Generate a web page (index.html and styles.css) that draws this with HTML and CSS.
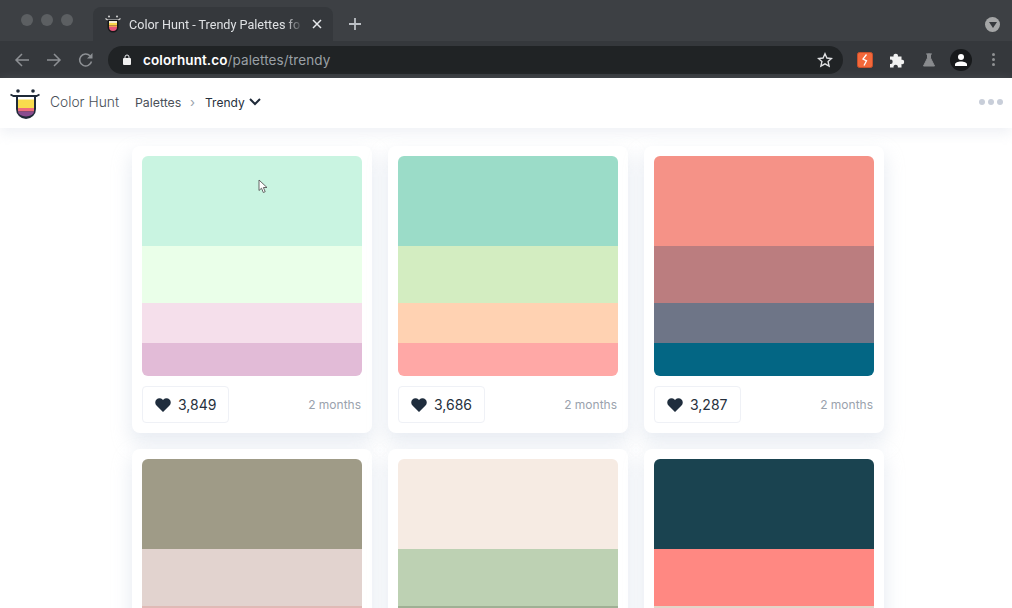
FILE: index.html
```html
<!DOCTYPE html>
<html lang="en">
<head>
<meta charset="utf-8">
<title>Color Hunt</title>
<link rel="stylesheet" href="styles.css">
</head>
<body>
<div class="browser">
  <div class="tabstrip">
    <div class="lights"><i></i><i></i><i></i></div>
    <div class="tab">
      <svg class="favicon" width="16" height="18" viewBox="0 0 16 18"><circle cx="4" cy="1.500" r="1" fill="#d8d8d8"/><circle cx="12" cy="1.500" r="1" fill="#d8d8d8"/><path d="M.5 3.500l2 1.500h11l2-1.500" fill="none" stroke="#d8d8d8" stroke-width="1.200"/><path d="M2.500 5h11v7a5.500 5.500 0 0 1-11 0z" fill="#17181a"/><path d="M4 6h8v2H4z" fill="#f4ead2"/><path d="M4 8h8v2.500H4z" fill="#f9d84a"/><path d="M4 10.500h8v1.500H4z" fill="#f29a55"/><path d="M4 12h8a4 4 0 0 1-8 0z" fill="#e8557a"/></svg>
      <span class="tab-title">Color Hunt - Trendy Palettes fo</span>
      <svg class="tab-close" width="10" height="10" viewBox="0 0 10 10"><path d="M1 1l8 8M9 1l-8 8" stroke="#e8eaed" stroke-width="1.500"/></svg>
    </div>
    <svg class="new-tab" width="14" height="14" viewBox="0 0 14 14"><path d="M7 1v12M1 7h12" stroke="#bdc1c6" stroke-width="1.800"/></svg>
    <div class="tab-search"><svg width="8" height="6" viewBox="0 0 8 6"><path d="M0 0h8L4 6z" fill="#35383c"/></svg></div>
  </div>
  <div class="toolbar">
    <svg class="nav" width="16" height="16" viewBox="0 0 16 16"><path d="M15 8H2M8 2L2 8l6 6" fill="none" stroke="#8d9094" stroke-width="1.500"/></svg>
    <svg class="nav" width="16" height="16" viewBox="0 0 16 16"><path d="M1 8h13M8 2l6 6-6 6" fill="none" stroke="#8d9094" stroke-width="1.500"/></svg>
    <svg class="nav" width="16" height="16" viewBox="0 0 16 16"><path d="M13.500 9.500A6 6 0 1 1 12 3.800" fill="none" stroke="#8d9094" stroke-width="1.500"/><path d="M14.500 1v5.500H9z" fill="#8d9094"/></svg>
    <div class="omnibox">
      <svg class="lock" width="10" height="12" viewBox="0 0 10 12"><path d="M3 4V3a2 2 0 0 1 4 0v1" fill="none" stroke="#e8eaed"/><rect x="1" y="4" width="8" height="7" rx="1" fill="#f1f1f1"/></svg>
      <span class="url"><b>colorhunt.co</b>/palettes/trendy</span>
      <svg class="star" width="16" height="16" viewBox="0 0 16 16"><path d="M8 1.800l1.900 4.200 4.600.5-3.400 3.100 1 4.500L8 11.800l-4.100 2.300 1-4.500L1.500 6.500l4.600-.5z" fill="none" stroke="#e0e1e3" stroke-width="1.400"/></svg>
    </div>
    <div class="ext-icons">
      <svg width="16" height="16" viewBox="0 0 16 16"><rect x=".5" y=".5" width="15" height="15" rx="2" fill="#f4683a" stroke="#c9502c"/><path d="M9.500 2.500L6 7l3.500 1.800L7 13.500" fill="none" stroke="#fff" stroke-width="1.300"/></svg>
      <svg width="16" height="16" viewBox="0 0 16 16"><path d="M1 4.500h3.600a2.200 2.200 0 1 1 4.300 0h3.600v3.300a2.200 2.200 0 1 1 0 4.300v3.400H8.800a2.200 2.200 0 1 0-4.200 0H1v-3.500a2.200 2.200 0 1 0 0-4.300z" fill="#f1f1f1"/></svg>
      <svg width="14" height="14" viewBox="0 0 14 14"><path d="M4 1h6M5.500 1v4L1.500 13h11L8.500 5V1z" fill="#898b8e" stroke="#898b8e"/></svg>
      <span class="avatar"><svg width="14" height="14" viewBox="0 0 14 14"><circle cx="7" cy="4" r="3" fill="#fff"/><path d="M1 13v-1.500c0-2 3-3 6-3s6 1 6 3V13z" fill="#fff"/></svg></span>
      <span class="kebab"><i></i><i></i><i></i></span>
    </div>
  </div>
</div>
<header class="site-header">
  <svg class="logo" width="30" height="30" viewBox="0 0 30 30"><circle cx="8" cy="2" r="1.800" fill="#1f2a38"/><circle cx="23" cy="2" r="1.800" fill="#1f2a38"/><path d="M.5 5.500l3 1.500h23l3-1.500" fill="none" stroke="#1f2a38" stroke-width="1.800"/><path d="M6 7h20v13a10 10 0 0 1-20 0z" fill="#1f2a38"/><path d="M8 8h16v3H8z" fill="#fff"/><path d="M8 10.500h16v8.500H8z" fill="#f9dc4e"/><path d="M8 19h16v3.500H8z" fill="#ee6c7c"/><path d="M8 22.500h16a8 5 0 0 1-16 0z" fill="#8a4c8f"/></svg>
  <span class="brand">Color Hunt</span>
  <span class="crumb">Palettes</span>
  <span class="sep">›</span>
  <span class="crumb-current">Trendy</span>
  <svg class="chevron" width="12" height="8" viewBox="0 0 12 8"><path d="M1 1l5 5 5-5" fill="none" stroke="#1f2a38" stroke-width="2"/></svg>
  <span class="more"><i></i><i></i><i></i></span>
</header>
<main class="grid">
  <article class="card">
    <div class="palette">
      <div class="c1" style="background:#c9f4e1"></div>
      <div class="c2" style="background:#eaffe9"></div>
      <div class="c3" style="background:#f5dfeb"></div>
      <div class="c4" style="background:#e2bbd7"></div>
    </div>
    <div class="meta"><button class="like"><svg width="16" height="14" viewBox="0 0 16 14"><path d="M8 14L1.500 7.500a4.200 4.200 0 0 1 0-6 4.200 4.200 0 0 1 6 0L8 2l.5-.5a4.200 4.200 0 0 1 6 0 4.200 4.200 0 0 1 0 6z" fill="#1f2d3d"/></svg>3,849</button><span class="age">2 months</span></div>
  </article>
  <article class="card">
    <div class="palette">
      <div class="c1" style="background:#9bdcc8"></div>
      <div class="c2" style="background:#d3edc1"></div>
      <div class="c3" style="background:#ffd2b2"></div>
      <div class="c4" style="background:#ffa8a6"></div>
    </div>
    <div class="meta"><button class="like"><svg width="16" height="14" viewBox="0 0 16 14"><path d="M8 14L1.500 7.500a4.200 4.200 0 0 1 0-6 4.200 4.200 0 0 1 6 0L8 2l.5-.5a4.200 4.200 0 0 1 6 0 4.200 4.200 0 0 1 0 6z" fill="#1f2d3d"/></svg>3,686</button><span class="age">2 months</span></div>
  </article>
  <article class="card">
    <div class="palette">
      <div class="c1" style="background:#f59287"></div>
      <div class="c2" style="background:#bb7d7f"></div>
      <div class="c3" style="background:#6e7587"></div>
      <div class="c4" style="background:#036684"></div>
    </div>
    <div class="meta"><button class="like"><svg width="16" height="14" viewBox="0 0 16 14"><path d="M8 14L1.500 7.500a4.200 4.200 0 0 1 0-6 4.200 4.200 0 0 1 6 0L8 2l.5-.5a4.200 4.200 0 0 1 6 0 4.200 4.200 0 0 1 0 6z" fill="#1f2d3d"/></svg>3,287</button><span class="age">2 months</span></div>
  </article>
  <article class="card">
    <div class="palette">
      <div class="c1" style="background:#9f9b87"></div>
      <div class="c2" style="background:#e2d3cf"></div>
      <div class="c3" style="background:#e0bab6"></div>
      <div class="c4" style="background:#c99"></div>
    </div>
  </article>
  <article class="card">
    <div class="palette">
      <div class="c1" style="background:#f6ebe3"></div>
      <div class="c2" style="background:#bdd1b3"></div>
      <div class="c3" style="background:#9fb094"></div>
      <div class="c4" style="background:#789"></div>
    </div>
  </article>
  <article class="card">
    <div class="palette">
      <div class="c1" style="background:#1a4350"></div>
      <div class="c2" style="background:#ff8882"></div>
      <div class="c3" style="background:#e3d5c8"></div>
      <div class="c4" style="background:#cbb"></div>
    </div>
  </article>
</main>
<svg class="cursor" width="10" height="15" viewBox="0 0 10 15"><path d="M1 1v10.500l2.500-2.300 1.800 4.300 1.900-.8-1.800-4.200H9z" fill="#fff" stroke="#555" stroke-width=".9"/></svg>
</body>
</html>
```
FILE: styles.css
```css
* { box-sizing: border-box; }
html, body { margin: 0; height: 608px; overflow: hidden; background: #fff; }
body { font-family: "Inter", "Liberation Sans", sans-serif; }
.browser { height: 78px; }
.tabstrip { height: 41px; background: #3d4044; display: flex; align-items: flex-end; padding-left: 21px; }
.lights { display: flex; gap: 8px; width: 72px; align-self: flex-start; padding-top: 14px; }
.lights i { width: 12px; height: 12px; border-radius: 50%; background: #5c5f62; }
.tab { width: 240px; height: 34px; background: #35383c; border-radius: 8px 8px 0 0; display: flex; align-items: center; padding: 0 11px 0 12px; }
.favicon { flex: none; margin-right: 8px; }
.tab-title { width: 174px; font-family: "Roboto", sans-serif; font-size: 12.600px; color: #dfe1e4; white-space: nowrap; overflow: hidden; -webkit-mask-image: linear-gradient(90deg, #000 90%, transparent); mask-image: linear-gradient(90deg, #000 90%, transparent); }
.tab-close { flex: none; margin-left: 9px; }
.new-tab { align-self: flex-start; margin: 17px 0 0 15px; }
.tab-search { margin: 17px 12px 0 auto; align-self: flex-start; width: 15px; height: 15px; border-radius: 50%; background: #a5a6a7; display: flex; align-items: center; justify-content: center; }
.toolbar { height: 37px; background: #35383c; display: flex; align-items: center; padding-left: 14px; }
.nav { flex: none; margin-right: 16px; }
.omnibox { width: 735px; height: 28px; margin-left: -2px; background: #202325; border-radius: 14px; display: flex; align-items: center; padding: 0 10px 0 14px; }
.lock { flex: none; margin-right: 11px; }
.url { font-size: 13.500px; color: #9aa0a6; white-space: nowrap; letter-spacing: .1px; }
.url b { color: #fff; font-weight: 600; }
.star { margin-left: auto; }
.ext-icons { display: grid; grid-template-columns: repeat(5, 32px); justify-items: center; align-items: center; margin-left: 6px; }
.avatar { width: 22px; height: 22px; border-radius: 50%; background: #17191b; display: flex; align-items: center; justify-content: center; }
.kebab { display: flex; flex-direction: column; gap: 2px; }
.kebab i { width: 3px; height: 3px; border-radius: 50%; background: #8f9193; }
.site-header { height: 50px; background: #fff; display: flex; align-items: center; padding: 0 9px 2px 10px; position: relative; z-index: 1; box-shadow: 0 5px 12px rgba(205,212,224,.32); }
.logo { flex: none; margin: 4px 10px 0 0; }
.brand { font-size: 13.800px; font-weight: 300; color: #4a5058; width: 85px; }
.crumb { font-size: 12.300px; color: #4a5058; width: 55px; }
.sep { font-size: 13px; color: #9aa1ab; width: 15px; }
.crumb-current { font-size: 12px; color: #27303c; width: 44px; }
.chevron { flex: none; }
.more { margin-left: auto; display: flex; gap: 3px; }
.more i { width: 6px; height: 6px; border-radius: 50%; background: #c8ced9; }
.grid { display: grid; grid-template-columns: repeat(3, 240px); gap: 16px; padding: 18px 0 0 132px; }
.card { height: 287px; background: #fff; border-radius: 8px; padding: 10px; box-shadow: 0 9px 18px 2px rgba(195,204,222,.36); }
.palette { height: 220px; border-radius: 6px; overflow: hidden; display: flex; flex-direction: column; }
.c1 { height: 90px; } .c2 { height: 57px; } .c3 { height: 40px; } .c4 { height: 33px; }
.meta { display: flex; align-items: center; justify-content: space-between; margin-top: 10px; }
.like { height: 37px; background: #fff; border: 1px solid #eff1f6; border-radius: 4px; display: flex; align-items: center; gap: 7px; padding: 0 12px 0 12px; font: 400 14px "Inter", sans-serif; color: #26303c; }
.age { font-size: 12px; color: #9aa2ad; margin-right: 1px; }
.cursor { position: absolute; left: 258px; top: 179px; }
```
